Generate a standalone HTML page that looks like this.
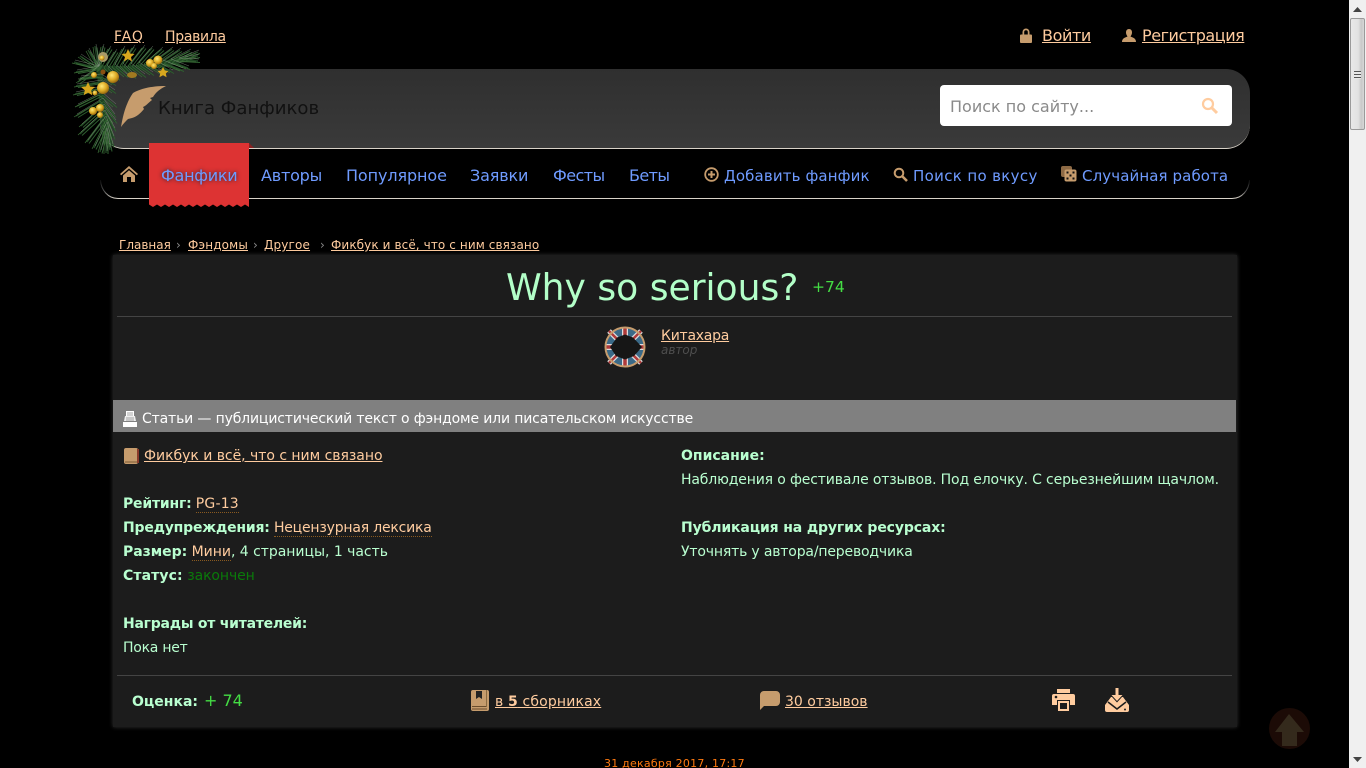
<!DOCTYPE html>
<html lang="ru"><head><meta charset="utf-8"><title>Why so serious?</title>
<style>
html,body{margin:0;padding:0;width:1366px;height:768px;overflow:hidden;background:#000}
body{font-family:"DejaVu Sans","Liberation Sans",sans-serif;font-size:14px;color:#b9ffd0;position:relative;letter-spacing:-.13px}
.a{position:absolute;white-space:nowrap;line-height:1.2}
a{color:#ffcc9f;text-decoration:underline}
svg{position:absolute;display:block}
.b{font-weight:bold;color:#b9ffd0}
.h{color:#ffcc9f;border-bottom:1px dotted #8a5a20}
.n{color:#6f9bff;font-size:16px;letter-spacing:-.2px}
.ns{color:#6f9bff;font-size:15px;letter-spacing:.13px}
</style></head><body>

<!-- header panel -->
<div class="a" style="left:100px;top:69px;width:1150px;height:79px;background:linear-gradient(#2f2f2f,#3a3a3a);border-radius:24px;border-bottom:1px solid #d8d2c8"></div>
<div class="a" style="left:118px;top:198px;width:1114px;height:1px;background:#d8d2c8"></div>
<svg style="left:100px;top:178px" width="1150" height="21" viewBox="0 0 1150 21" fill="none">
<defs><linearGradient id="g" x1="0" y1="0" x2="0" y2="1"><stop offset="0" stop-color="#0c0c0c"/><stop offset=".6" stop-color="#555"/><stop offset="1" stop-color="#d8d2c8"/></linearGradient></defs>
<path d="M.5 2C1 12 8 20.500 18 20.500" stroke="url(#g)"/><path d="M1149.500 2C1149 12 1142 20.500 1132 20.500" stroke="url(#g)"/></svg>

<a class="a" style="left:114px;top:29px;letter-spacing:.9px">FAQ</a>
<a class="a" style="left:165px;top:29px;letter-spacing:-.3px">Правила</a>

<svg style="left:1020px;top:28px" width="12" height="15" viewBox="0 0 12 15"><path d="M2.500 7V4a3.500 3.500 0 0 1 7 0V7H7.800V4a1.800 1.800 0 0 0-3.600 0V7z" fill="#c69c6d"/><rect x="0" y="6.500" width="12" height="8.500" rx="1" fill="#c69c6d"/></svg>
<a class="a" style="left:1042px;top:26px;font-size:16px;letter-spacing:-.4px">Войти</a>
<svg style="left:1122px;top:29px" width="14" height="13" viewBox="0 0 14 13"><path d="M7 0C9 0 10 1.500 10 3.500S9 6.500 8.500 7.500c2 1 5.500 1.500 5.500 5.500H0C0 9 3.500 8.500 5.500 7.500 5 6.500 4 5.500 4 3.500S5 0 7 0z" fill="#c69c6d"/></svg>
<a class="a" style="left:1142px;top:26px;font-size:16px;letter-spacing:-.45px">Регистрация</a>

<!-- search -->
<div class="a" style="left:940px;top:85px;width:292px;height:41px;background:#fff;border-radius:4px"></div>
<div class="a" style="left:950px;top:97px;font-size:16px;color:#8a8a8a;letter-spacing:0">Поиск по сайту...</div>
<svg style="left:1201px;top:97px" width="18" height="18" viewBox="0 0 18 18"><circle cx="7" cy="7" r="5" fill="none" stroke="#ffcc9f" stroke-width="2.200"/><path d="M10.500 10.500L16 16" stroke="#ffcc9f" stroke-width="3"/></svg>

<!-- nav -->
<svg style="left:120px;top:166px" width="18" height="16" viewBox="0 0 18 16"><path d="M9 0L0 8l1.200 1.300L9 2.500l7.800 6.800L18 8z" fill="#c69c6d"/><path d="M3 9.500L9 4.300l6 5.200V16h-4v-5H7v5H3z" fill="#c69c6d"/></svg>
<div class="a" style="left:149px;top:143px;width:100px;height:61px;background:#dd3333"></div>
<svg style="left:149px;top:202px" width="100" height="5" viewBox="0 0 100 5"><path d="M0 0H100V5L96 2.500 92 5 88 2.500 84 5 80 2.500 76 5 72 2.500 68 5 64 2.500 60 5 56 2.500 52 5 48 2.500 44 5 40 2.500 36 5 32 2.500 28 5 24 2.500 20 5 16 2.500 12 5 8 2.500 4 5 0 2.500z" fill="#dd3333"/></svg>
<svg style="left:249px;top:143px" width="5" height="5" viewBox="0 0 5 5"><path d="M0 0L5 5H0z" fill="#8a2020"/></svg>
<div class="a n" style="left:161px;top:166px;text-shadow:0 0 4px #223;letter-spacing:-.25px">Фанфики</div>
<div class="a n" style="left:261px;top:166px">Авторы</div>
<div class="a n" style="left:346px;top:166px;letter-spacing:-.1px">Популярное</div>
<div class="a n" style="left:470px;top:166px;letter-spacing:-.15px">Заявки</div>
<div class="a n" style="left:553px;top:166px;letter-spacing:-.55px">Фесты</div>
<div class="a n" style="left:629px;top:166px;letter-spacing:-.6px">Беты</div>

<svg style="left:704px;top:167px" width="15" height="15" viewBox="0 0 15 15"><circle cx="7.500" cy="7.500" r="6.300" fill="none" stroke="#c69c6d" stroke-width="1.800"/><path d="M7.500 4v7M4 7.500h7" stroke="#c69c6d" stroke-width="2"/></svg>
<div class="a ns" style="left:724px;top:167px">Добавить фанфик</div>
<svg style="left:893px;top:167px" width="15" height="15" viewBox="0 0 15 15"><circle cx="6" cy="6" r="4.300" fill="none" stroke="#c69c6d" stroke-width="2"/><path d="M9 9l5 5" stroke="#c69c6d" stroke-width="2.600"/></svg>
<div class="a ns" style="left:913px;top:167px;letter-spacing:.34px">Поиск по вкусу</div>
<svg style="left:1061px;top:166px" width="16" height="16" viewBox="0 0 16 16"><rect x="0" y="0" width="11" height="11" rx="2" fill="#8d6a45"/><rect x="3.500" y="3.500" width="12" height="12" rx="2" fill="#c69c6d"/><g fill="#111"><rect x="5.500" y="5.500" width="2" height="2"/><rect x="11.500" y="5.500" width="2" height="2"/><rect x="8.500" y="8.500" width="2" height="2"/><rect x="5.500" y="11.500" width="2" height="2"/><rect x="11.500" y="11.500" width="2" height="2"/></g></svg>
<div class="a ns" style="left:1082px;top:167px;letter-spacing:.1px">Случайная работа</div>

<!-- garland -->
<svg style="left:70px;top:40px" width="132" height="114" viewBox="0 0 132 114">
<defs>
<radialGradient id="au" cx=".4" cy=".35" r=".7"><stop offset="0" stop-color="#ffe878"/><stop offset=".55" stop-color="#dcaa24"/><stop offset="1" stop-color="#8a5c0c"/></radialGradient>
<path id="nd" d="M28 28l-10-18M28 28l-3-22M28 28l5-22M28 28l-18-12M28 28l-24-6M28 28l-22 4M28 28l-20 14M28 28l12-20
M36 27l10-16M36 27l12 12M44 26l10-18M44 26l12 10M52 25l12-18M52 25l12 12M60 25l14-18M60 25l14 11M68 24l14-16M68 24l14 10M76 23l16-14M76 23l16 10M84 22l18-13M84 22l18 10M92 22l18-12M92 22l20 8M100 21l20-10M100 21l18 7M108 20l20-8M108 20l20 1M114 19l14-3
M30 36l-20 2M30 36l14 8M30 42l-24 4M30 42l14 10M31 48l-26 6M31 54l-24 12M31 54l14 12M32 60l-26 16M32 60l12 16M33 66l-22 20M33 66l12 16M34 72l-24 22M34 72l10 18M35 78l-18 24M35 78l8 20M36 84l-12 24M36 84l6 22M36 90l-6 22M36 90l4 20M36 96l0 17"/>
</defs>
<path d="M28 28Q70 32 118 18M30 30Q32 70 36 104" fill="none" stroke="#1d3f20" stroke-width="6"/>
<use href="#nd" fill="none" stroke="#1e4422" stroke-width="1.400"/>
<use href="#nd" transform="translate(2 1.500)" fill="none" stroke="#2f5f30" stroke-width="1"/>
<use href="#nd" transform="translate(-2 1)" fill="none" stroke="#3d7038" stroke-width=".7"/>
<use href="#nd" transform="translate(1 -2)" fill="none" stroke="#8f9a8c" stroke-width=".5" opacity=".75"/>
<g fill="url(#au)">
<circle cx="33" cy="17" r="5" fill="#a99a68"/><circle cx="32" cy="18" r="2.500"/>
<circle cx="43" cy="37" r="6"/><circle cx="33" cy="48" r="6"/><circle cx="33" cy="32" r="2.500" fill="#8a5010"/><circle cx="24" cy="35" r="3"/>
<circle cx="80" cy="23" r="4"/><circle cx="88" cy="20" r="4.500"/><circle cx="84" cy="26" r="3"/>
<circle cx="30" cy="68" r="4"/><circle cx="23" cy="71" r="4"/><circle cx="25" cy="53" r="2.500"/><circle cx="30" cy="75" r="3"/>
<path d="M58 9l2 4.500 4.500.5-3.500 3 1 4.500-4-2.500-4 2.500 1-4.500-3.500-3 4.500-.5z" fill="#d8a71e"/>
<path d="M93 27l1.800 3.500 3.700.5-2.700 2.500.8 3.700-3.600-2-3.600 2 .8-3.700-2.700-2.500 3.700-.5z" fill="#d8a71e"/>
<path d="M18 42l2 4.500 5 .5-3.800 3.300 1.100 5-4.300-2.700-4.300 2.700 1.100-5L11 47l5-.5z" fill="#d8a71e"/>
<ellipse cx="62" cy="35" rx="5" ry="3" fill="#a07a20"/>
</g></svg>

<!-- logo -->
<svg style="left:120px;top:85px" width="48" height="44" viewBox="0 0 48 44"><path d="M1 42C3 30 6 18 13 8 20 4 30 1 46 1 40 4 36 7 33 12L30 13 32 15C28 18 26 21 23 22L24 24C20 29 16 32 12 33L8 34C6 36 3 39 1 42z" fill="#c69c6d"/></svg>
<div class="a" style="left:158px;top:98px;font-size:18.100px;color:#111;letter-spacing:0">Книга Фанфиков</div>

<!-- breadcrumbs -->
<a class="a" style="left:119px;top:238px;font-size:12px;letter-spacing:0">Главная</a>
<div class="a" style="left:176px;top:238px;font-size:12px;color:#888">›</div>
<a class="a" style="left:188px;top:238px;font-size:12px;letter-spacing:.15px">Фэндомы</a>
<div class="a" style="left:253px;top:238px;font-size:12px;color:#888">›</div>
<a class="a" style="left:264px;top:238px;font-size:12px;letter-spacing:.15px">Другое</a>
<div class="a" style="left:320px;top:238px;font-size:12px;color:#888">›</div>
<a class="a" style="left:331px;top:238px;font-size:12px;letter-spacing:.1px">Фикбук и всё, что с ним связано</a>

<!-- main panel -->
<div class="a" style="left:113px;top:255px;width:1124px;height:472px;background:#1c1c1c;box-shadow:0 0 4px #333"></div>
<div class="a" style="left:506px;top:267px;font-size:36.100px;color:#b3ffc8;letter-spacing:0">Why so serious?</div>
<div class="a" style="left:812px;top:278px;font-size:15.500px;color:#44dd44;letter-spacing:0">+74</div>
<div class="a" style="left:117px;top:316px;width:1115px;height:1px;background:#444"></div>

<!-- avatar -->
<svg style="left:604px;top:326px" width="42" height="42" viewBox="0 0 42 42">
<circle cx="21" cy="21" r="19.500" fill="#3b6a88"/>
<g stroke="#ddd" stroke-width="5"><path d="M5 5L37 37M37 5L5 37"/></g>
<g stroke="#b03a3a" stroke-width="2.500"><path d="M5 5L37 37M37 5L5 37"/></g>
<path d="M21 2v38M2 21h38" stroke="#ddd" stroke-width="6"/>
<path d="M21 2v38M2 21h38" stroke="#b03a3a" stroke-width="3.500"/>
<circle cx="21" cy="21" r="19.500" fill="none" stroke="#c69c6d" stroke-width="2"/>
<path d="M21 8.500L29 11.500 38 21 30 30 21 33.500 12 30 6 21 13 11.500z" fill="#161616"/>
</svg>
<a class="a" style="left:661px;top:328px;letter-spacing:-.25px">Китахара</a>
<div class="a" style="left:661px;top:343px;font-size:12px;font-style:italic;color:#4e4e4e;letter-spacing:0">автор</div>

<!-- category -->
<div class="a" style="left:113px;top:400px;width:1123px;height:32px;background:#808080"></div>
<svg style="left:122px;top:411px" width="16" height="16" viewBox="0 0 16 16"><path d="M4 0h8v5H4z" fill="#fff"/><path d="M3 5h10l1 5H2z" fill="#eee"/><path d="M1 11h14v5H1z" fill="#fff"/><path d="M5 2h6M5 4h6M4 7h8M4 9h8" stroke="#888" stroke-width=".8"/></svg>
<div class="a" style="left:142px;top:411px;color:#fff;letter-spacing:-.15px">Статьи — публицистический текст о фэндоме или писательском искусстве</div>

<!-- left column -->
<svg style="left:124px;top:448px" width="15" height="16" viewBox="0 0 15 16"><rect width="14" height="16" rx="2" fill="#c69c6d"/><path d="M1 13.500h13v1H1z" fill="#7a5a35"/><rect x="13" y="1" width="2" height="14" fill="#8a3a2a"/></svg>
<a class="a" style="left:144px;top:448px;letter-spacing:-.03px">Фикбук и всё, что с ним связано</a>

<div class="a" style="left:123px;top:496px;letter-spacing:-.2px"><span class="b">Рейтинг:</span> <span class="h" style="letter-spacing:.2px">PG-13</span></div>
<div class="a" style="left:123px;top:520px;letter-spacing:-.2px"><span class="b">Предупреждения:</span> <span class="h">Нецензурная лексика</span></div>
<div class="a" style="left:123px;top:544px;letter-spacing:-.03px"><span class="b">Размер:</span> <span class="h">Мини</span>, 4 страницы, 1 часть</div>
<div class="a" style="left:123px;top:568px;letter-spacing:.1px"><span class="b">Статус:</span> <span style="color:#0a7a0a;letter-spacing:-.1px">закончен</span></div>
<div class="a b" style="left:123px;top:616px;letter-spacing:-.24px">Награды от читателей:</div>
<div class="a" style="left:123px;top:640px;letter-spacing:-.25px">Пока нет</div>

<!-- right column -->
<div class="a b" style="left:681px;top:448px;letter-spacing:0">Описание:</div>
<div class="a" style="left:681px;top:472px;letter-spacing:-.15px">Наблюдения о фестивале отзывов. Под елочку. С серьезнейшим щачлом.</div>
<div class="a b" style="left:681px;top:520px">Публикация на других ресурсах:</div>
<div class="a" style="left:681px;top:544px;letter-spacing:-.17px">Уточнять у автора/переводчика</div>

<!-- footer -->
<div class="a" style="left:117px;top:675px;width:1115px;height:1px;background:#444"></div>
<div class="a b" style="left:132px;top:694px;letter-spacing:0">Оценка:</div>
<div class="a" style="left:204px;top:691px;font-size:16px;color:#44dd44;letter-spacing:0">+ 74</div>
<svg style="left:471px;top:690px" width="18" height="21" viewBox="0 0 18 21"><rect width="18" height="21" rx="2" fill="#c69c6d"/><path d="M5 1h6v8L8 7 5 9z" fill="#222"/><path d="M1 16.500h15M1 19h15" stroke="#6a4d2d" stroke-width="1"/><rect x="15" y="0" width="1" height="17" fill="#8a6a40"/></svg>
<a class="a" style="left:495px;top:694px;letter-spacing:.15px">в <b>5</b> сборниках</a>
<svg style="left:760px;top:691px" width="20" height="19" viewBox="0 0 20 19"><path d="M4 0h12a4 4 0 0 1 4 4v7a4 4 0 0 1-4 4H4L0 19V4a4 4 0 0 1 4-4z" fill="#c69c6d"/></svg>
<a class="a" style="left:785px;top:694px;letter-spacing:0">30 отзывов</a>
<svg style="left:1052px;top:689px" width="23" height="22" viewBox="0 0 23 22"><path d="M5 0h13v4H5z" fill="#ffcc9f"/><path d="M2 5h19a2 2 0 0 1 2 2v9h-5v-5H5v5H0V7a2 2 0 0 1 2-2z" fill="#ffcc9f"/><path d="M6 12h11v10H6z" fill="#ffcc9f"/><path d="M8 14h7v6H8z" fill="#1c1c1c"/><circle cx="4" cy="8" r="1.300" fill="#1c1c1c"/></svg>
<svg style="left:1105px;top:688px" width="24" height="24" viewBox="0 0 24 24"><path d="M10.500 0h3v7h4l-5.500 6-5.500-6h4z" fill="#ffcc9f"/><path d="M6 9h1l5 5.500L17 9h1l6 8v5a2 2 0 0 1-2 2H2a2 2 0 0 1-2-2v-5z" fill="#ffcc9f"/><path d="M3 14l9 7 9-7" fill="none" stroke="#1c1c1c" stroke-width="1.500"/><circle cx="20" cy="21.500" r="1" fill="#222"/></svg>

<div class="a" style="left:604px;top:757px;font-size:11px;color:#ff7a10;letter-spacing:.23px">31 декабря 2017, 17:17</div>

<!-- up -->
<div class="a" style="left:1269px;top:708px;width:41px;height:41px;border-radius:50%;background:#1c0b06"></div>
<svg style="left:1274px;top:713px" width="32" height="34" viewBox="0 0 32 34"><path d="M15 1L30 19H23V33H8V19H1z" fill="#342a1c"/></svg>

<!-- scrollbar -->
<div class="a" style="left:1349px;top:0;width:17px;height:768px;background:#f0f0f0"></div>
<svg style="left:1349px;top:0" width="17" height="768" viewBox="0 0 17 768"><path d="M8.500 7L4 12h9z" fill="#444"/><path d="M8.500 763L4 758h9z" fill="#444" transform="translate(0 -1)"/></svg>
<div class="a" style="left:1350px;top:18px;width:15px;height:112px;box-sizing:border-box;background:linear-gradient(90deg,#e8e8e8,#e2e2e2 55%,#c8c8c8 80%,#d8d8d8);border:1px solid #9a9a9a;border-radius:2px"></div>
<div class="a" style="left:1354px;top:71px;width:7px;height:8px;background:repeating-linear-gradient(#555 0 1px,#e8e8e8 1px 3px)"></div>
</body></html>
